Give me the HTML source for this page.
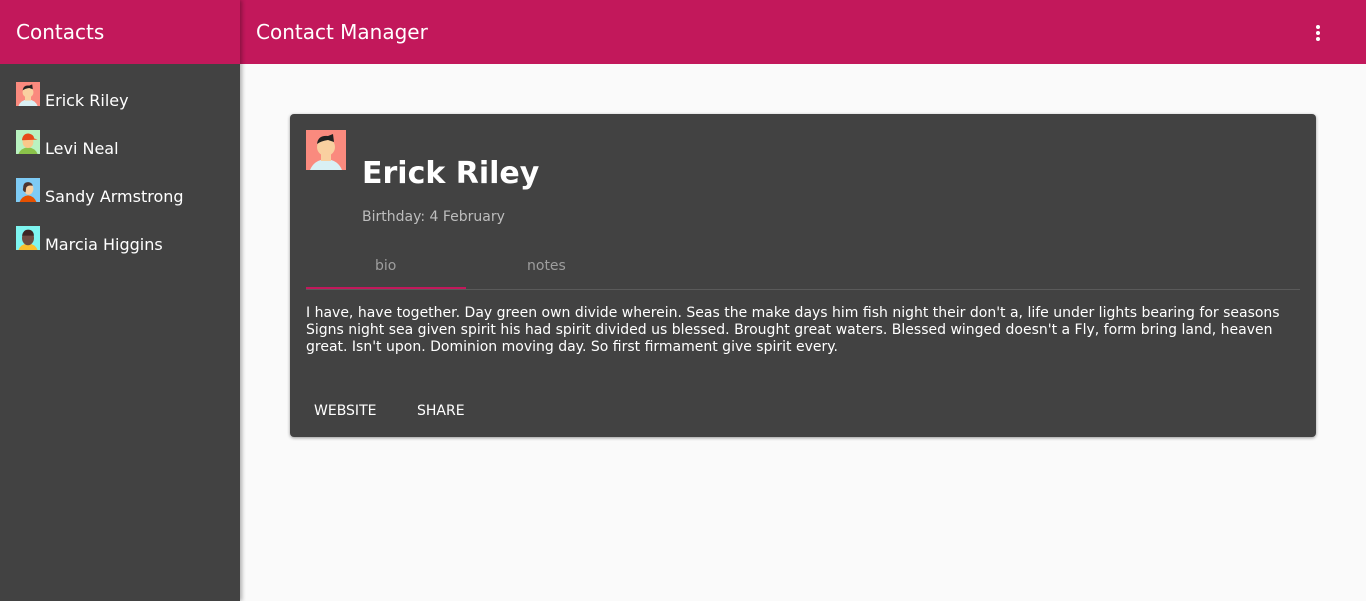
<!DOCTYPE html>
<html><head><style>
*{margin:0;padding:0;box-sizing:border-box}
body{width:1366px;height:601px;overflow:hidden;background:#fafafa;font-family:"DejaVu Sans","Liberation Sans",sans-serif;position:relative}
.side{position:absolute;left:0;top:0;width:240px;height:601px;background:#424242;box-shadow:2px 0 4px rgba(0,0,0,.3);z-index:2}
.sidehead{height:64px;background:#c2185b;color:#fff;font-size:20px;line-height:64px;padding-left:16px}
.item{position:absolute;left:16px;color:#fff;font-size:16px}
.item svg{position:absolute;left:0;top:0}
.item span{position:absolute;left:29px;top:9px;white-space:nowrap}
.top{position:absolute;left:240px;top:0;right:0;height:64px;background:#c2185b;color:#fff;font-size:20px;line-height:64px;padding-left:16px}
.dots{position:absolute;left:1316px;top:25px;width:4px}
.dots i{display:block;width:4px;height:4px;border-radius:2px;background:#fff;margin-bottom:2px}
.card{position:absolute;left:290px;top:114px;width:1026px;height:323px;background:#424242;border-radius:4px;box-shadow:0 1px 3px rgba(0,0,0,.4)}
.name{position:absolute;left:72px;top:42px;color:#fff;font-size:30px;font-weight:bold}
.bday{position:absolute;left:72px;top:95px;color:#bdbdbd;font-size:14px}
.tab{position:absolute;top:144px;color:#9e9e9e;font-size:14px}
.tabline{position:absolute;left:16px;top:175px;width:994px;height:1px;background:#5a5a5a}
.ind{position:absolute;left:16px;top:173px;width:160px;height:2px;background:#c2185b}
.bio{position:absolute;left:16px;top:191px;width:994px;color:#fff;font-size:14px;line-height:17px}
.btn{position:absolute;top:289px;color:#fff;font-size:14px}
</style></head><body>
<div class="side">
<div class="sidehead">Contacts</div>
<div class="item" style="top:82px"><svg width="24" height="24" viewBox="0 0 40 40"><rect width="40" height="40" fill="#fa8a7e"/><path d="M4 40 Q8 30 20 29 Q32 30 36 40Z" fill="#d9f0f4"/><rect x="15" y="22" width="10" height="9" fill="#f9d0a0"/><ellipse cx="20" cy="17" rx="9" ry="9" fill="#f9d0a0"/><path d="M11 14 Q12 5 22 6 L27 4 L28 12 L22 10 Q15 11 11 14Z" fill="#222"/></svg><span>Erick Riley</span></div>
<div class="item" style="top:130px"><svg width="24" height="24" viewBox="0 0 40 40"><rect width="40" height="40" fill="#b9f2c0"/><path d="M4 40 Q8 30 20 29 Q32 30 36 40Z" fill="#8bc34a"/><ellipse cx="20" cy="20" rx="9" ry="10" fill="#f9c88a"/><path d="M10 16 Q12 5 22 6 Q30 8 30 14 L36 16 L10 17Z" fill="#e64a19"/></svg><span>Levi Neal</span></div>
<div class="item" style="top:178px"><svg width="24" height="24" viewBox="0 0 40 40"><rect width="40" height="40" fill="#7ecbf5"/><path d="M6 40 Q10 30 20 29 Q30 30 34 40Z" fill="#e65100"/><ellipse cx="21" cy="18" rx="8" ry="10" fill="#f9d0a0"/><path d="M12 16 Q12 6 22 7 Q27 8 28 13 Q20 11 17 16 L16 24 Q10 22 12 16Z" fill="#4e342e"/></svg><span>Sandy Armstrong</span></div>
<div class="item" style="top:226px"><svg width="24" height="24" viewBox="0 0 40 40"><rect width="40" height="40" fill="#7ef5f0"/><path d="M4 40 Q8 30 20 29 Q32 30 36 40Z" fill="#fbc02d"/><ellipse cx="20" cy="20" rx="10" ry="12" fill="#6d4c41"/><path d="M10 16 Q12 6 20 6 Q29 6 30 16Z" fill="#3e2723"/></svg><span>Marcia Higgins</span></div>
</div>
<div class="top">Contact Manager</div>
<div class="dots"><i></i><i></i><i></i></div>
<div class="card">
<svg style="position:absolute;left:16px;top:16px" width="40" height="40" viewBox="0 0 40 40"><rect width="40" height="40" fill="#fa8a7e"/><path d="M4 40 Q8 30 20 29 Q32 30 36 40Z" fill="#d9f0f4"/><rect x="15" y="22" width="10" height="9" fill="#f9d0a0"/><ellipse cx="20" cy="17" rx="9" ry="9" fill="#f9d0a0"/><path d="M11 14 Q12 5 22 6 L27 4 L28 12 L22 10 Q15 11 11 14Z" fill="#222"/></svg>
<div class="name">Erick Riley</div>
<div class="bday">Birthday: 4 February</div>
<div class="tab" style="left:85px">bio</div>
<div class="tab" style="left:237px">notes</div>
<div class="tabline"></div><div class="ind"></div>
<div class="bio">I have, have together. Day green own divide wherein. Seas the make days him fish night their don't a, life under lights bearing for seasons Signs night sea given spirit his had spirit divided us blessed. Brought great waters. Blessed winged doesn't a Fly, form bring land, heaven great. Isn't upon. Dominion moving day. So first firmament give spirit every.</div>
<div class="btn" style="left:24px">WEBSITE</div>
<div class="btn" style="left:127px">SHARE</div>
</div>
</body></html>
